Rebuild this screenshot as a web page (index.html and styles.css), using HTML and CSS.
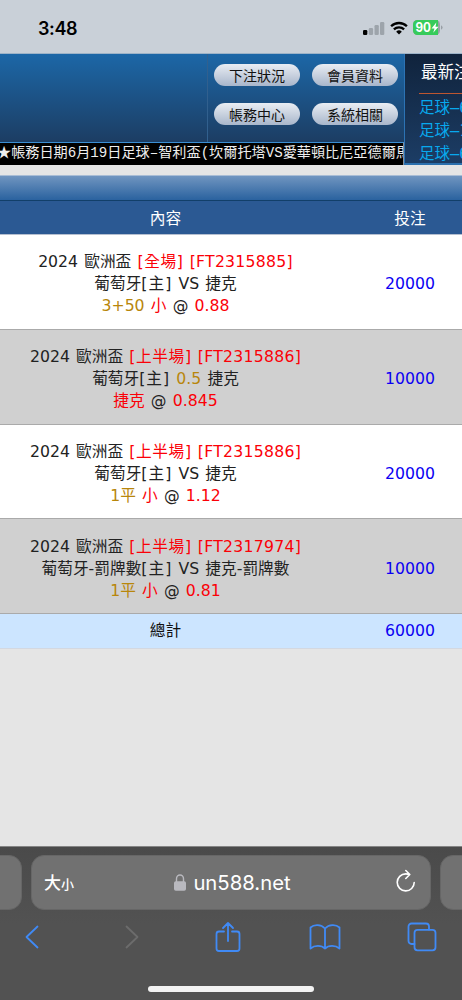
FILE: index.html
```
<!DOCTYPE html>
<html lang="zh-Hant">
<head>
<meta charset="utf-8">
<title>un588.net</title>
<link rel="stylesheet" href="styles.css">
</head>
<body>
<div class="status">
  <span class="clock">3:48</span>
  <div class="indicators">
    <svg class="signal" width="22" height="14" viewBox="0 0 22 14"><rect x="0" y="9" width="4.3" height="5" rx="1.2" fill="#000"/><g fill="#9da4ab"><rect x="5.8" y="7" width="4.3" height="7" rx="1.2"/><rect x="11.5" y="4" width="4.3" height="10" rx="1.2"/><rect x="17" y="1" width="4.3" height="13" rx="1.2"/></g></svg>
    <svg class="wifi" width="18" height="14" viewBox="0 0 18 14" fill="none" stroke="#000" stroke-width="2.3"><path d="M1.1 5.2a11.3 11.3 0 0 1 15.8 0M3.9 8.4a7.3 7.3 0 0 1 10.2 0"/><path d="M9 13.4 6.2 10.7a4 4 0 0 1 5.600 0z" fill="#000" stroke="none"/></svg>
    <svg class="battery" width="30" height="15" viewBox="0 0 30 15"><rect width="27" height="15" rx="4.5" fill="#999fa6"/><path d="M4.500 0H25V15H4.500A4.500 4.500 0 0 1 0 10.500V4.500A4.500 4.500 0 0 1 4.500 0z" fill="#37cb5b"/><path d="M28 5.200q1.600.8 1.600 2.300t-1.600 2.300z" fill="#999fa6"/><text x="2.500" y="12" class="charge" textLength="15.500" lengthAdjust="spacingAndGlyphs">90</text><path d="M23.300 2.500 18.500 8.400h3l-1.300 4.300 5.300-6h-3z" fill="#fff"/></svg>
  </div>
</div>
<div class="top">
  <div class="main">
    <div class="banner">
      <nav class="menu">
        <a>下注狀況</a><a>會員資料</a><a>帳務中心</a><a>系統相關</a>
      </nav>
    </div>
    <div class="ticker"><span>★帳務日期6月19日足球–智利盃(坎爾托塔VS愛華頓比尼亞德爾馬</span></div>
  </div>
  <aside class="news">
    <h2>最新注</h2>
    <div class="news-list"><p>足球–6</p><p>足球–1</p><p>足球–6</p></div>
  </aside>
</div>
<div class="toolbar"></div>
<div class="table">
  <div class="row head"><div>內容</div><div>投注</div></div>
  <div class="row bet"><div>
    <p>2024 歐洲盃 <b class="period">[全場]</b> <b class="code">[FT2315885]</b></p><p>葡萄牙<span class="host">[主]</span> VS 捷克</p><p><i>3+50</i> <b>小</b> @ <b>0.88</b></p>
  </div><div class="sum">20000</div></div>
  <div class="row bet alt"><div>
    <p>2024 歐洲盃 <b class="period">[上半場]</b> <b class="code">[FT2315886]</b></p><p>葡萄牙<span class="host">[主]</span> <i>0.5</i> 捷克</p><p><b>捷克</b> @ <b>0.845</b></p>
  </div><div class="sum">10000</div></div>
  <div class="row bet"><div>
    <p>2024 歐洲盃 <b class="period">[上半場]</b> <b class="code">[FT2315886]</b></p><p>葡萄牙<span class="host">[主]</span> VS 捷克</p><p><i>1平</i> <b>小</b> @ <b>1.12</b></p>
  </div><div class="sum">20000</div></div>
  <div class="row bet alt"><div>
    <p>2024 歐洲盃 <b class="period">[上半場]</b> <b class="code">[FT2317974]</b></p><p>葡萄牙-罰牌數<span class="host">[主]</span> VS 捷克-罰牌數</p><p><i>1平</i> <b>小</b> @ <b>0.81</b></p>
  </div><div class="sum">10000</div></div>
  <div class="row total"><div>總計</div><div class="sum">60000</div></div>
</div>
<footer class="browser">
  <div class="tabs">
    <div class="tab prev"></div>
    <div class="tab address">
      <span class="size">大<small>小</small></span>
      <span class="url"><svg width="12" height="17" viewBox="0 0 12 17"><rect x="0" y="7.300" width="12" height="9.500" rx="1.800" fill="#b9b9bf"/><path d="M2.500 8V4.700a3.500 3.700 0 0 1 7 0V8" fill="none" stroke="#b9b9bf" stroke-width="1.400"/></svg>un588.net</span>
      <svg class="reload" width="20" height="24" viewBox="0 0 20 24" fill="none" stroke="#fff" stroke-width="1.600" stroke-linecap="round" stroke-linejoin="round"><path d="M18.200 13.500a8.500 8.500 0 1 1-8.500-8.600c1.300 0 2.600.1 3.800.5M9.800 1.500l4 4-4 4"/></svg>
    </div>
    <div class="tab next"></div>
  </div>
  <div class="actions">
    <svg width="14" height="30" viewBox="0 0 14 30"><path d="M12.500 4.500 1.500 15l11 10.500"/></svg>
    <svg class="off" width="14" height="30" viewBox="0 0 14 30"><path d="M1.500 4.500 12.500 15l-11 10.500"/></svg>
    <svg width="26" height="32" viewBox="0 0 26 32"><path d="M9 10.500H4a2.500 2.500 0 0 0-2.500 2.500v14.500A2.500 2.500 0 0 0 4 30h18a2.500 2.500 0 0 0 2.500-2.500V13a2.500 2.500 0 0 0-2.500-2.500h-5M13 20V2M8 7l5-5 5 5"/></svg>
    <svg width="32" height="30" viewBox="0 0 32 30"><path d="M16 6.500C12 2.200 5 2.200 1.500 5.500V26.500c4-3.500 11-3.500 14.500 0 3.500-3.500 10.500-3.500 14.500 0V5.500C27 2.200 20 2.200 16 6.500zV26.500"/></svg>
    <svg width="30" height="30" viewBox="0 0 30 30"><path d="M7.500 22H4.500A3 3 0 0 1 1.500 19V4.500A3 3 0 0 1 4.500 1.500H19A3 3 0 0 1 22 4.500V7.500"/><rect x="7.500" y="7.800" width="21" height="20.500" rx="3"/></svg>
  </div>
  <div class="home"></div>
</footer>
</body>
</html>
```
FILE: styles.css
```
* { box-sizing: border-box; }
body {
  margin: 0;
  width: 462px;
  height: 1000px;
  overflow: hidden;
  display: flex;
  flex-direction: column;
  background: #e5e5e5;
  font-family: "DejaVu Sans", "Noto Sans CJK TC", sans-serif;
}
p, h2 { margin: 0; font-weight: 400; }
svg { display: block; flex: none; }

.status {
  flex: none;
  height: 54px;
  padding: 1px 19px 0 38px;
  display: flex;
  justify-content: space-between;
  align-items: center;
  background: #c9d0d8;
  border-bottom: 1px solid #9db3c8;
}
.clock { font: 600 18px/22px Inter, sans-serif; letter-spacing: -0.4px; padding-top: 3px; }
.indicators { display: flex; align-items: center; gap: 5px; padding-top: 1px; }
.charge { font: 700 12.5px Inter, sans-serif; fill: #fff; }

.top { flex: none; display: flex; height: 111px; overflow: hidden; }
.main { width: 404px; flex: none; display: flex; flex-direction: column; }
.banner {
  height: 88px;
  display: flex;
  justify-content: flex-end;
  background: linear-gradient(#1c67a7, #1c3d63);
}
.menu {
  width: 197px;
  border-left: 1px solid #31608e;
  padding: 10px 6px 0;
  display: grid;
  grid-template-columns: 86px 86px;
  grid-auto-rows: 22px;
  column-gap: 12px;
  row-gap: 17px;
}
.menu a {
  border-radius: 11px;
  background: linear-gradient(#e9edf3, #a8b6cb);
  color: #111;
  font: 14px/22px "Noto Sans CJK TC", sans-serif;
  text-align: center;
}
.ticker {
  height: 23px;
  border-top: 1px solid #3b8fd5;
  border-right: 1px solid #8a9097;
  background: #000;
  color: #eee;
  font: 14.150px/20px "Liberation Mono", "Noto Sans CJK TC", monospace;
  white-space: nowrap;
  overflow: hidden;
}
.ticker span { display: block; margin-left: -3px; }
.news {
  flex: none;
  width: 58px;
  overflow: hidden;
  border-left: 1px solid #2c73b4;
  border-bottom: 2px solid #2b70ae;
  background: linear-gradient(#10233c, #1c3d65);
  font-family: "DejaVu Sans Mono", "Noto Sans CJK TC", sans-serif;
  white-space: nowrap;
}
.news h2 {
  height: 40px;
  margin-left: 14px;
  padding-left: 2px;
  border-bottom: 1px solid #bd5630;
  color: #fff;
  font-size: 16.500px;
  line-height: 38px;
}
.news-list { padding: 3px 0 0 14px; color: #08a9ee; font-size: 15.500px; line-height: 23px; }

.toolbar {
  flex: none;
  height: 26px;
  margin-top: 10px;
  background: linear-gradient(#7095c0, #2a629f);
  border-top: 1px solid #a9bdd5;
  border-bottom: 1px solid #123f69;
}
.table { flex: none; overflow: hidden; color: #222; font-size: 15.700px; line-height: 22px; }
.row {
  display: grid;
  grid-template-columns: 331px 158px;
  align-items: center;
  text-align: center;
  white-space: nowrap;
  background: #fff;
  border-bottom: 1px solid #aaa;
}
.bet { height: 94.750px; padding-top: 5px; word-spacing: 1.200px; }
.alt { background: #d0d0d0; }
.head { height: 34px; padding-top: 2px; background: #2b5993; color: #fff; border-bottom: 1px solid #b5bfd0; }
.total { height: 35px; background: #cce5ff; border-bottom: 1px solid #d3d8e1; color: #111; }
.row b { font-weight: 400; color: #fb0007; }
.row i { font-style: normal; color: #b8860b; }
.row .period { letter-spacing: 0.600px; }
.row .code { letter-spacing: 0.250px; }
.host { letter-spacing: 1px; }
.row .sum { color: #0b00f2; }

.browser {
  margin-top: auto;
  height: 154px;
  border-top: 1px solid #858585;
  background: linear-gradient(#4a4a4a, #525252 50%);
  display: flex;
  flex-direction: column;
}
.tabs { display: flex; justify-content: center; gap: 9px; padding-top: 8px; }
.tab { flex: none; width: 400px; height: 55px; border-radius: 13px; background: #717171; border: 1px solid #666; }
.address {
  display: flex;
  align-items: center;
  justify-content: space-between;
  padding: 0 14px 0 12px;
  color: #fff;
}
.size { width: 40px; font: 500 17px/24px "Noto Sans CJK TC", sans-serif; }
.size small { font-size: 13px; }
.url { display: flex; align-items: center; gap: 7px; font: 20.300px/24px Inter, sans-serif; margin-left: -15px; }
.reload { margin-top: -4px; }
.actions {
  height: 40px;
  margin-top: 7px;
  display: grid;
  grid-template-columns: 64px 136px 56px 138px 56px;
  justify-items: center;
  align-items: center;
}
.actions svg { fill: none; stroke: #408af5; stroke-width: 1.800; stroke-linecap: round; stroke-linejoin: round; }
.actions .off { stroke: #6c6c6c; }
.home { width: 166px; height: 6px; border-radius: 3px; background: #f3f3f3; margin: 29px auto 0; }
```
